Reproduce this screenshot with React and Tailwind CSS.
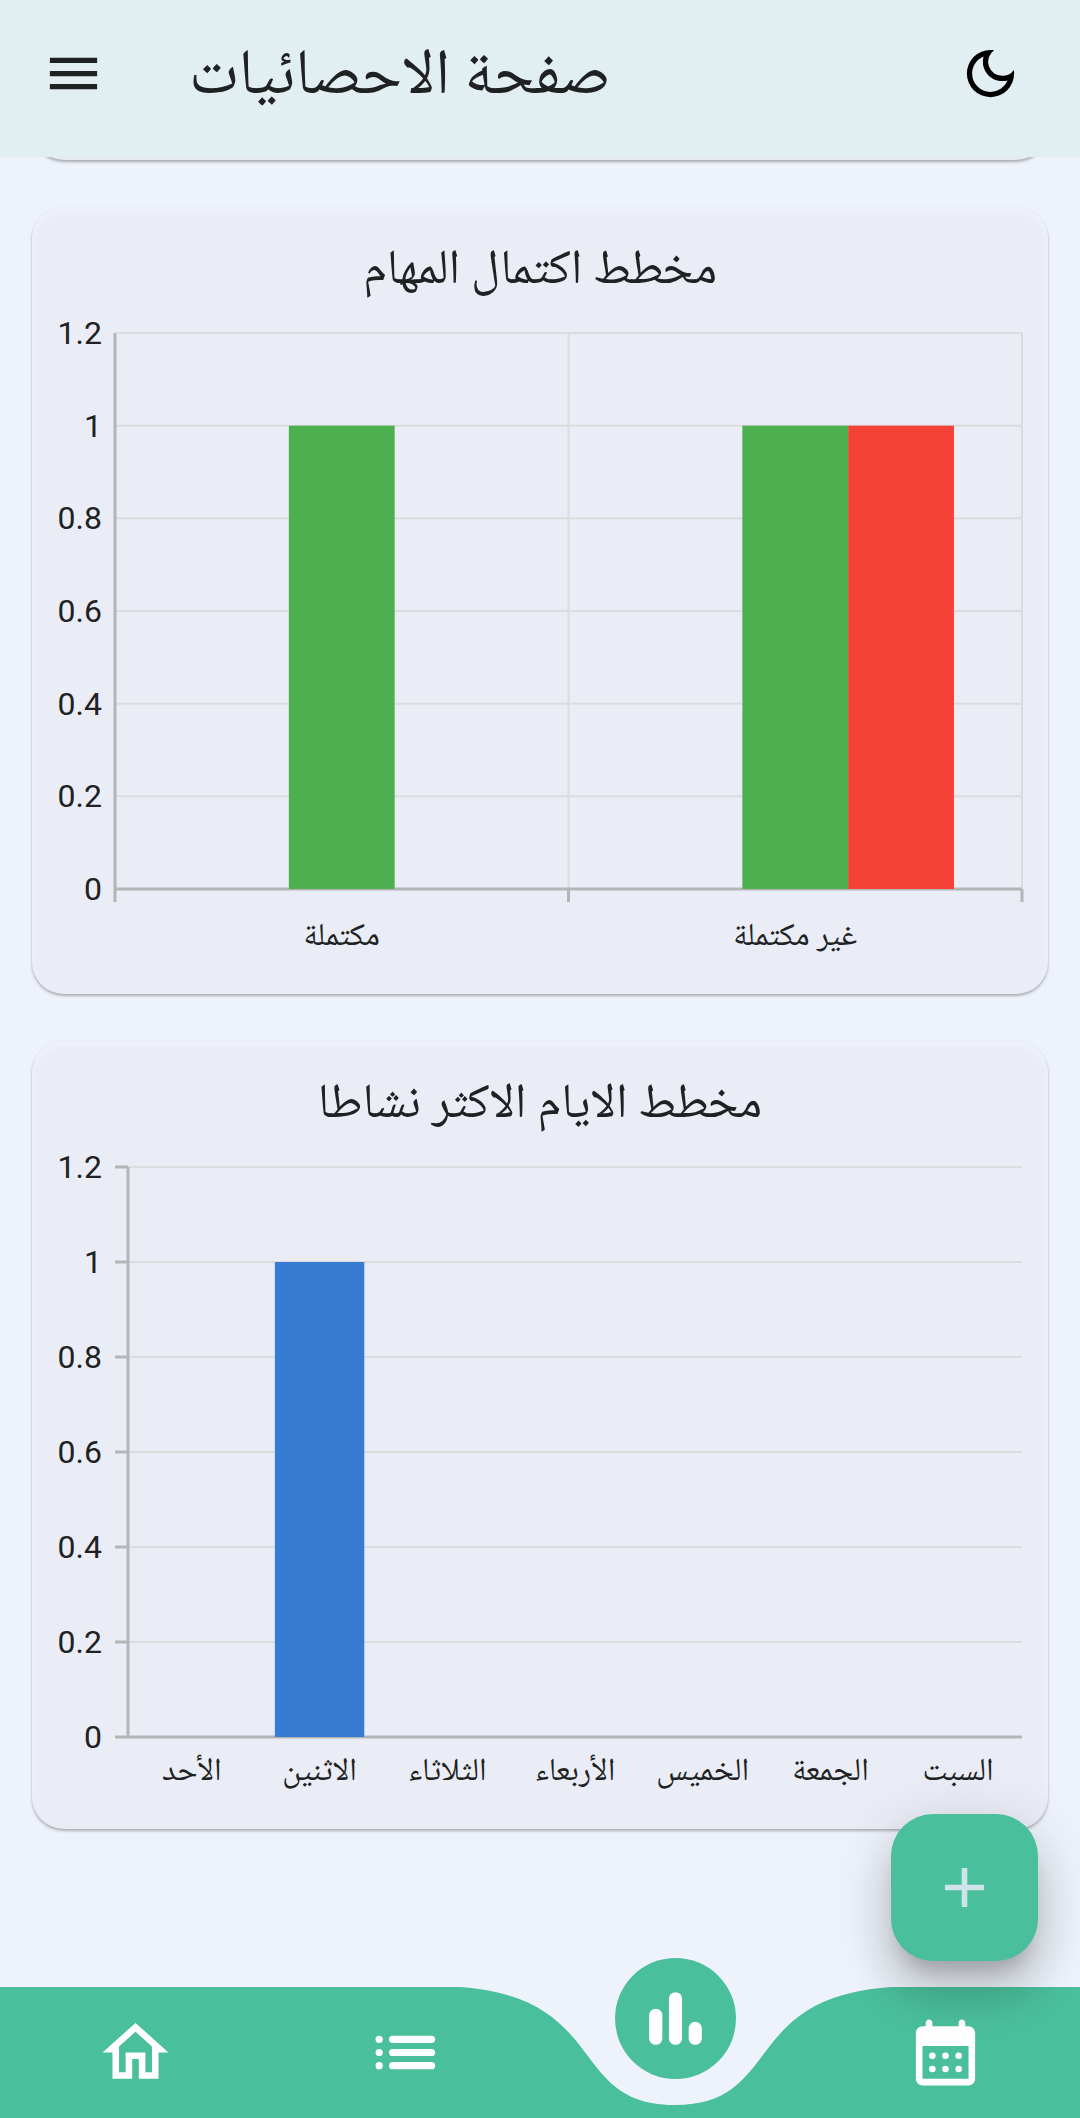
import React from "react";

const ARABIC = "font-['Noto_Naskh_Arabic','Noto_Sans_Arabic','DejaVu_Sans',sans-serif]";
const TICKS = ["1.2", "1", "0.8", "0.6", "0.4", "0.2", "0"];
const MAX = 1.2;

const COMPLETION = {
  title: "مخطط اكتمال المهام",
  categories: ["مكتملة", "غير مكتملة"],
  slots: 3,
  bars: [
    { category: 0, slot: 1, value: 1, color: "#4caf50" },
    { category: 1, slot: 1, value: 1, color: "#4caf50" },
    { category: 1, slot: 2, value: 1, color: "#f44336" },
  ],
};

const ACTIVE_DAYS = {
  title: "مخطط الايام الاكثر نشاطا",
  categories: ["الأحد", "الاثنين", "الثلاثاء", "الأربعاء", "الخميس", "الجمعة", "السبت"],
  slots: 1,
  bars: [{ category: 1, slot: 0, value: 1, color: "#357cd2" }],
};

const pct = (n) => `${n * 100}%`;

function Plot({ data, verticalGrid, className }) {
  const count = data.categories.length;
  const barWidth = 0.7 / count / data.slots;
  const rows = TICKS.map((_, i) => i / (TICKS.length - 1));
  const columns = Array.from({ length: count + 1 }, (_, i) => i / count);
  return (
    <svg className={className} overflow="visible" role="img" aria-label={data.title}>
      {rows.slice(0, -1).map((y) => (
        <line key={y} x1="0" x2="100%" y1={pct(y)} y2={pct(y)} stroke="#dcdcde" strokeWidth="2" />
      ))}
      {verticalGrid &&
        columns.slice(1).map((x) => (
          <line key={x} x1={pct(x)} x2={pct(x)} y1="0" y2="100%" stroke="#dcdcde" strokeWidth="2" />
        ))}
      <line x1="-1" x2="100%" y1="100%" y2="100%" stroke="#b5b5b7" strokeWidth="3" />
      <line x1="0" x2="0" y1="0" y2="100%" stroke="#b5b5b7" strokeWidth="3" />
      {verticalGrid ? (
        <svg y="100%" overflow="visible">
          {columns.map((x) => (
            <line key={x} x1={pct(x)} x2={pct(x)} y1="0" y2="13" stroke="#b5b5b7" strokeWidth="3" />
          ))}
        </svg>
      ) : (
        rows.map((y) => (
          <line key={y} x1="-13" x2="0" y1={pct(y)} y2={pct(y)} stroke="#b5b5b7" strokeWidth="3" />
        ))
      )}
      {data.bars.map((b) => (
        <rect
          key={`${b.category}-${b.slot}`}
          x={pct((b.category + 0.15) / count + b.slot * barWidth)}
          width={pct(barWidth)}
          y={pct(1 - b.value / MAX)}
          height={pct(b.value / MAX)}
          fill={b.color}
        />
      ))}
    </svg>
  );
}

function ChartCard({ data, verticalGrid }) {
  return (
    <section className="mx-8 rounded-[32px] bg-[#eaedf5] pt-9 pb-9 shadow-[0_2px_3px_rgba(0,0,0,0.28),0_0_2px_rgba(0,0,0,0.06),inset_0_5px_4px_#eef2fa]">
      <h2 dir="rtl" className={`mb-[30px] text-center text-[49px] leading-[60px] ${ARABIC}`}>
        {data.title}
      </h2>
      <div className="flex pr-[26px]">
        <div className={`flex shrink-0 flex-col ${verticalGrid ? "w-[83px]" : "w-24"}`}>
          <ul className="-my-5 flex w-[70px] grow flex-col justify-between text-right font-[Roboto,sans-serif] text-[32px] leading-10">
            {TICKS.map((t) => (
              <li key={t}>{t}</li>
            ))}
          </ul>
        </div>
        <Plot
          data={data}
          verticalGrid={verticalGrid}
          className={`min-w-0 flex-1 ${verticalGrid ? "h-[556px]" : "h-[570px]"}`}
        />
      </div>
      <ul className={`flex pr-[26px] ${verticalGrid ? "mt-[29px] pl-[83px]" : "mt-4 pl-24"}`}>
        {data.categories.map((c) => (
          <li key={c} dir="rtl" className={`flex-1 text-center text-[32px] leading-10 whitespace-nowrap ${ARABIC}`}>
            {c}
          </li>
        ))}
      </ul>
    </section>
  );
}

function Icon({ children, className }) {
  return (
    <svg viewBox="0 0 24 24" fill="currentColor" className={className} aria-hidden="true">
      {children}
    </svg>
  );
}

function NavBar() {
  const item = "flex h-[131px] items-center justify-center";
  return (
    <nav className="sticky bottom-0 z-10 grid h-[131px] grid-cols-4 text-white">
      <svg
        className="absolute inset-0 h-full w-full text-[#4abf9b]"
        viewBox="0 0 1080 131"
        preserveAspectRatio="none"
        aria-hidden="true"
      >
        <path
          fill="currentColor"
          d="M0 0H459C610 10 567 118 675 118C783 118 740 10 891 0H1080V131H0Z"
        />
      </svg>
      <a href="#home" aria-label="الرئيسية" className={`relative ${item}`}>
        <Icon className="size-[79px]">
          <path d="M12 5.69l5 4.5V18h-2v-6H9v6H7v-7.81l5-4.5M12 3L2 12h3v8h6v-6h2v6h6v-8h3L12 3z" />
        </Icon>
      </a>
      <a href="#tasks" aria-label="المهام" className={`relative ${item}`}>
        <Icon className="size-[79px]">
          {[8, 12, 16].map((y) => (
            <g key={y}>
              <circle cx="4" cy={y} r="1.1" />
              <rect x="7" y={y - 1.1} width="14" height="2.2" rx="1.1" />
            </g>
          ))}
        </Icon>
      </a>
      <a href="#stats" aria-label="الاحصائيات" aria-current="page" className="relative flex justify-center">
        <span className="-mt-[29px] flex size-[121px] items-center justify-center rounded-full bg-[#4abf9b]">
          <Icon className="size-[79px]">
            <rect x="4" y="9" width="4" height="11" rx="2" />
            <rect x="10" y="4" width="4" height="16" rx="2" />
            <rect x="16" y="13" width="4" height="7" rx="2" />
          </Icon>
        </span>
      </a>
      <a href="#calendar" aria-label="التقويم" className={`relative ${item}`}>
        <Icon className="size-[79px]">
          <path
            fillRule="evenodd"
            d="M7 2c.55 0 1 .45 1 1v1h8V3c0-.55.45-1 1-1s1 .45 1 1v1h1c1.1 0 2 .9 2 2v14c0 1.1-.9 2-2 2H5c-1.1 0-2-.9-2-2V6c0-1.1.9-2 2-2h1V3c0-.55.45-1 1-1zM5 10v10h14V10z"
          />
          {[13, 17].map((y) => [8, 12, 16].map((x) => <circle key={`${x}-${y}`} cx={x} cy={y} r="1" />))}
        </Icon>
      </a>
    </nav>
  );
}

export default function App() {
  return (
    <div className="flex min-h-screen flex-col bg-[#eef3fb] text-[#202123]">
      <header className="sticky top-0 z-10 flex h-[157px] items-center bg-[#e1eef2] pr-[58px] pb-[10px] pl-[42px]">
        <button type="button" aria-label="القائمة">
          <Icon className="size-[63px]">
            <path d="M3 18h18v-2H3v2zm0-5h18v-2H3v2zm0-7v2h18V6H3z" />
          </Icon>
        </button>
        <h1 dir="rtl" className={`ml-[84px] pt-3 text-[64px] leading-[80px] ${ARABIC}`}>
          صفحة الاحصائيات
        </h1>
        <button type="button" aria-label="الوضع الليلي" className="ml-auto text-black">
          <Icon className="size-[63px]">
            <path d="M9.37 5.51A7.35 7.35 0 0 0 9.1 7.5c0 4.08 3.32 7.4 7.4 7.4.68 0 1.35-.09 1.99-.27A7.014 7.014 0 0 1 12 19c-3.86 0-7-3.14-7-7 0-2.93 1.81-5.45 4.37-6.49zM12 3a9 9 0 1 0 9 9c0-.46-.04-.92-.1-1.36a5.389 5.389 0 0 1-4.4 2.26 5.403 5.403 0 0 1-3.14-9.8c-.44-.06-.9-.1-1.36-.1z" />
          </Icon>
        </button>
      </header>

      <main className="-mt-[77px] flex flex-1 flex-col gap-[47px]">
        <div className="mx-8 h-20 shrink-0 rounded-[32px] bg-[#e6eaee] shadow-[0_2px_3px_rgba(0,0,0,0.3)]" />
        <ChartCard data={COMPLETION} verticalGrid />
        <ChartCard data={ACTIVE_DAYS} />
      </main>

      <NavBar />
      <button
        type="button"
        aria-label="إضافة"
        className="fixed right-[42px] bottom-[157px] z-20 flex size-[147px] items-center justify-center rounded-[42px] bg-[#4abf9b] text-[#cfe4ea] shadow-[0_18px_21px_-10px_rgba(0,0,0,0.2),0_32px_45px_5px_rgba(0,0,0,0.13),0_13px_58px_10px_rgba(0,0,0,0.1)]"
      >
        <Icon className="size-[67px]">
          <path d="M19 13h-6v6h-2v-6H5v-2h6V5h2v6h6v2z" />
        </Icon>
      </button>
    </div>
  );
}
